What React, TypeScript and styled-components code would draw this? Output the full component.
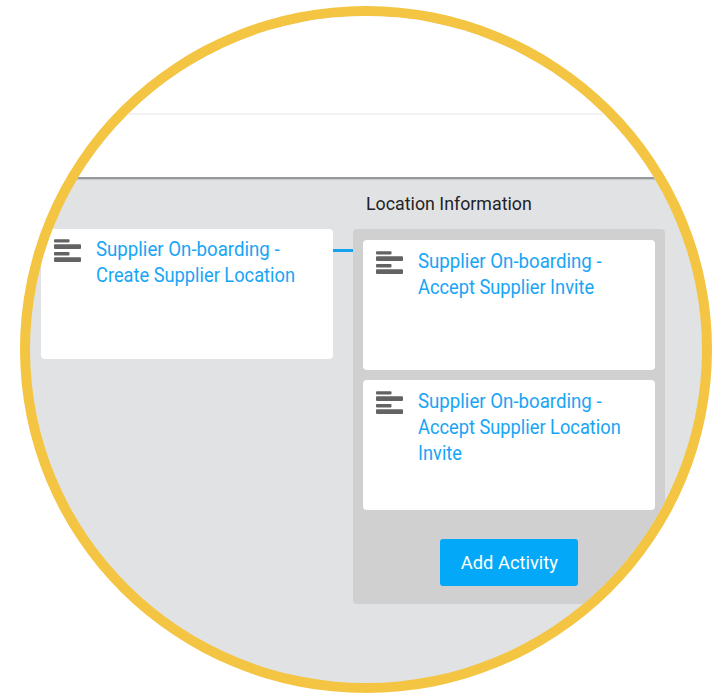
import React from "react";
import styled, { createGlobalStyle } from "styled-components";

const GlobalStyle = createGlobalStyle`
  body { margin: 0; background: #fff; }
  *, *::before, *::after { box-sizing: border-box; }
`;

const Page = styled.main`
  width: 727px;
  height: 700px;
  padding: 6px 0 0 20px;
  overflow: hidden;
  font-family: Roboto, "Liberation Sans", sans-serif;
`;

const Lens = styled.div`
  width: 692px;
  height: 687px;
  border: 10px solid #f4c542;
  border-radius: 50%;
  overflow: hidden;
  display: flex;
  flex-direction: column;
  background: #e1e2e4;
`;

const TopBar = styled.header`
  flex: none;
  height: 99px;
  background: #fff;
  border-bottom: 2px solid #f3f3f4;
`;

const SubBar = styled.div`
  flex: none;
  height: 64px;
  background: #fff;
  border-bottom: 2px solid #97989c;
  box-shadow: 0 1px 1px #c9cacc;
`;

const Board = styled.section`
  flex: 1;
  display: flex;
  align-items: flex-start;
  padding: 10px 0 0 11px;
`;

const Column = styled.div<{ $width: number }>`
  flex: none;
  width: ${(p) => p.$width}px;
`;

const ColumnTitle = styled.h2`
  height: 40px;
  margin: 0;
  padding-left: 13px;
  font-size: 19px;
  font-weight: 400;
  line-height: 29px;
  color: #222226;
  white-space: nowrap;
`;

const Condensed = styled.span<{ $ratio: number }>`
  display: inline-block;
  transform: scaleX(${(p) => p.$ratio});
  transform-origin: ${(p) => (p.$ratio > 0.96 ? "center" : "left")};
  white-space: nowrap;
`;

const Connector = styled.div`
  flex: none;
  width: 20px;
  height: 3px;
  margin-top: 60px;
  background: #17a2ef;
`;

const Group = styled.div`
  height: 375px;
  display: flex;
  flex-direction: column;
  align-items: center;
  gap: 10px;
  padding: 11px 10px 0;
  border-radius: 4px;
  background: #d0d0d0;
`;

const Card = styled.article<{ $inset: number }>`
  width: 292px;
  height: 130px;
  display: flex;
  align-items: flex-start;
  gap: 15px;
  padding: ${(p) => p.$inset}px 14px 0 13.4px;
  border-radius: 4px;
  background: #fff;
`;

const CardLink = styled.a`
  width: 220px;
  font-size: 19.5px;
  line-height: 26px;
  color: #18a5f5;
`;

const Icon = styled.svg`
  flex: none;
  display: block;
  width: 27px;
  height: 24px;
  margin-top: 2px;
`;

const AddButton = styled.button`
  width: 138px;
  height: 47px;
  margin-top: 19px;
  padding: 0;
  border: 0;
  border-radius: 3px;
  background: #03a9f8;
  color: #fff;
  font: 400 19px/47px Roboto, "Liberation Sans", sans-serif;
`;

function ActivityCard({ lines, inset = 9 }: { lines: string[]; inset?: number }) {
  return (
    <Card $inset={inset}>
      <Icon viewBox="0 0 27 24" fill="#636363" aria-hidden="true">
        <rect x="0" y="0.2" width="15.5" height="3.4" rx="1" />
        <rect x="0" y="5.2" width="27" height="4.9" rx="1" />
        <rect x="0" y="13.1" width="15.5" height="3.4" rx="1" />
        <rect x="0" y="18.2" width="27" height="4.9" rx="1" />
      </Icon>
      <CardLink>
        {lines.map((line, i) => (
          <div key={line}>
            <Condensed $ratio={i === 0 ? 0.957 : 0.936}>{line}</Condensed>
          </div>
        ))}
      </CardLink>
    </Card>
  );
}

export default function App() {
  return (
    <>
      <GlobalStyle />
      <Page>
        <Lens>
          <TopBar />
          <SubBar />
          <Board>
            <Column $width={292}>
              <ColumnTitle />
              <ActivityCard inset={8} lines={["Supplier On-boarding -", "Create Supplier Location"]} />
            </Column>
            <Connector />
            <Column $width={312}>
              <ColumnTitle>
                <Condensed $ratio={0.937}>Location Information</Condensed>
              </ColumnTitle>
              <Group>
                <ActivityCard lines={["Supplier On-boarding -", "Accept Supplier Invite"]} />
                <ActivityCard lines={["Supplier On-boarding -", "Accept Supplier Location", "Invite"]} />
                <AddButton>
                  <Condensed $ratio={0.965}>Add Activity</Condensed>
                </AddButton>
              </Group>
            </Column>
          </Board>
        </Lens>
      </Page>
    </>
  );
}
